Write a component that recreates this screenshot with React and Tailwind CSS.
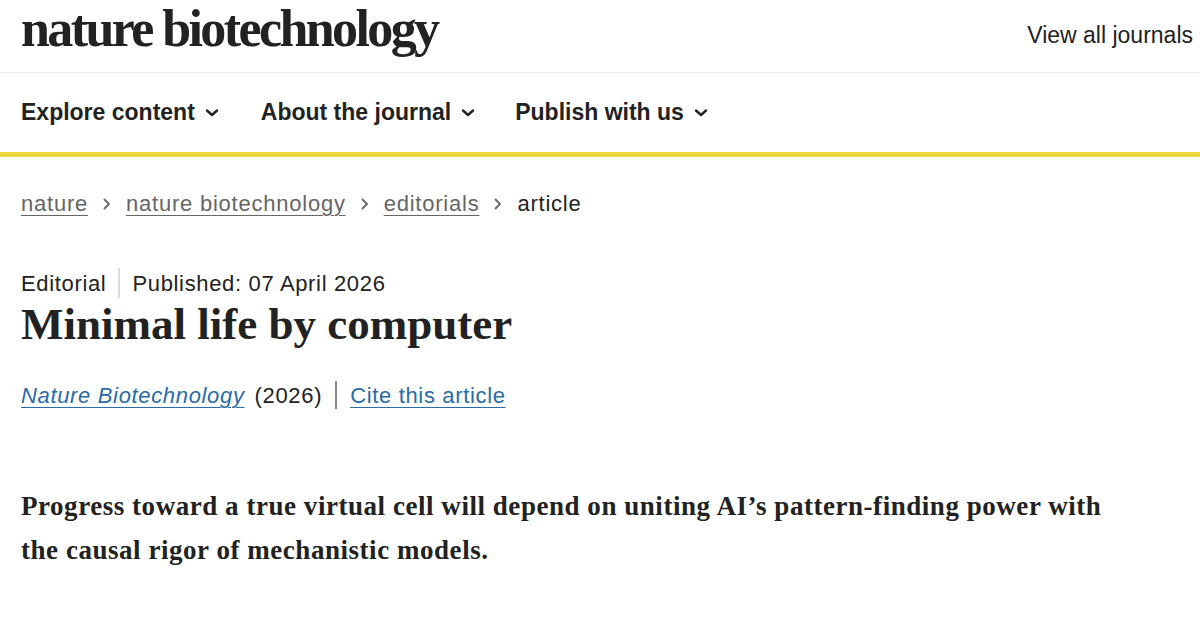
const serif = "font-['Liberation_Serif','DejaVu_Serif',serif]"
const sans = "font-['Liberation_Sans','Helvetica',Arial,sans-serif]"

function Chevron() {
  return (
    <svg width="14" height="8" viewBox="0 0 14 8" className="ml-[10px] mt-[1px]" fill="none">
      <path d="M2 1.5 7 6l5-4.5" stroke="#222" strokeWidth="2.4" strokeLinecap="round" strokeLinejoin="round" />
    </svg>
  )
}

function Crumb({ children }) {
  return <a className="text-[#666] underline underline-offset-[4px] decoration-1">{children}</a>
}

function Sep() {
  return (
    <svg width="8" height="12" viewBox="0 0 8 12" className="mx-[15px] mt-[1px]" fill="none">
      <path d="M1.5 1.5 6 6l-4.5 4.5" stroke="#666" strokeWidth="1.8" strokeLinecap="round" strokeLinejoin="round" />
    </svg>
  )
}

export default function App() {
  const nav = [
    { label: "Explore content", gap: "mr-[42px]" },
    { label: "About the journal", gap: "mr-[40px]" },
    { label: "Publish with us", gap: "" },
  ]

  return (
    <div className={`w-[1200px] h-[629px] bg-white text-[#222] ${sans} overflow-hidden`}>
      {/* masthead */}
      <header className="flex items-start justify-between h-[73px] border-b border-[#ececec] pl-[21px] pr-[7px]">
        <h1 className={`${serif} font-bold text-[52px] leading-none tracking-[-0.05em] text-[#222] mt-[3px]`}>
          nature biotechnology
        </h1>
        <a className="text-[23px] mt-[18px] text-[#222]">View all journals</a>
      </header>

      {/* primary nav */}
      <nav className="flex items-center h-[84px] pl-[21px] border-b-[5px] border-[#eed942]">
        {nav.map((item) => (
          <button key={item.label} className={`flex items-center ${item.gap} text-[23px] font-bold text-[#222]`}>
            {item.label}
            <Chevron />
          </button>
        ))}
      </nav>

      <main className="pl-[21px]">
        {/* breadcrumbs */}
        <div className="flex items-center text-[22px] tracking-[0.035em] mt-[32px] h-[28px]">
          <Crumb>nature</Crumb>
          <Sep />
          <Crumb>nature biotechnology</Crumb>
          <Sep />
          <Crumb>editorials</Crumb>
          <Sep />
          <span className="text-[#222]">article</span>
        </div>

        {/* article header */}
        <div className="flex items-center text-[22px] tracking-[0.03em] mt-[52px] h-[28px]">
          <span>Editorial</span>
          <span className="mx-[12px] w-[2px] h-[30px] bg-[#d5dde3]" />
          <span>Published: 07 April 2026</span>
        </div>
        <h2 className={`${serif} font-bold text-[45px] leading-[52px] text-[#222] mt-[1px]`}>
          Minimal life by computer
        </h2>

        <div className="flex items-center text-[22px] tracking-[0.03em] mt-[31px] h-[28px]">
          <a className="italic text-[#2a6ba8] underline underline-offset-[4px] decoration-1">Nature Biotechnology</a>
          <span className="ml-[10px]">(2026)</span>
          <span className="mx-[13px] w-[2px] h-[28px] bg-[#888]" />
          <a className="text-[#2a6ba8] underline underline-offset-[4px] decoration-1">Cite this article</a>
        </div>

        {/* standfirst */}
        <p className={`${serif} font-bold text-[27px] leading-[44px] tracking-[0.02em] text-[#222] mt-[75px] w-[1105px]`}>
          Progress toward a true virtual cell will depend on uniting AI’s pattern-finding power with the causal rigor of mechanistic models.
        </p>
      </main>
    </div>
  )
}
